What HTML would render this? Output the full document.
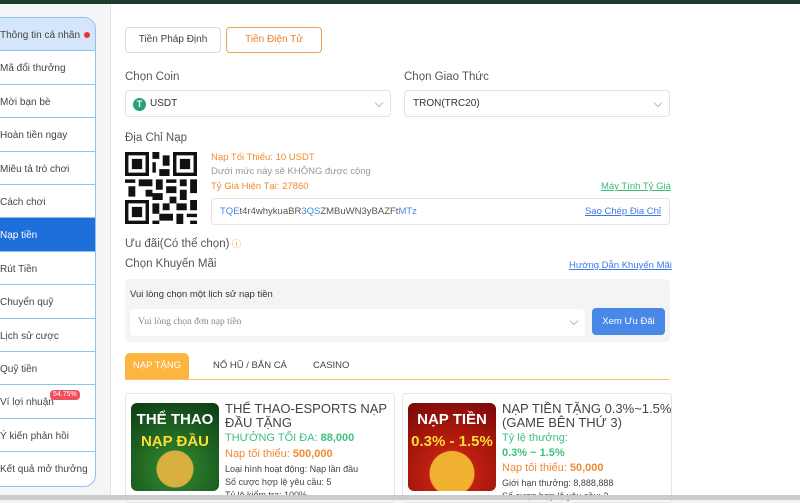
<!DOCTYPE html>
<html><head><meta charset="utf-8"><style>
*{box-sizing:border-box;margin:0;padding:0}
body{width:800px;height:500px;overflow:hidden;background:#f4f5f7;font-family:"Liberation Sans",sans-serif;position:relative;color:#333}
.top{position:absolute;left:0;top:0;width:800px;height:4px;background:#1d3a2a}
.side{position:absolute;left:-8px;top:17px;width:104px;height:470px;border:1px solid #8ec0f0;border-radius:0 12px 12px 0;background:#fff;overflow:hidden}
.side div{height:33.4px;border-bottom:1px solid #8ec0f0;font-size:10px;color:#444;padding-left:7px;line-height:35px;position:relative}
.side .first{background:#d5e6fb}
.side .act{background:#1e6fd9;color:#fff}
.dot{position:absolute;left:91px;top:14px;width:6px;height:6px;border-radius:50%;background:#e53935}
.badge{position:absolute;left:57px;top:5px;background:#ef4e5c;color:#fff;font-size:7px;line-height:10px;padding:0 3px;border-radius:4px}
.main{position:absolute;left:110px;top:4px;width:690px;height:492px;background:#fff;border-left:1px solid #e4e4e4}
.abs{position:absolute}
.btn{position:absolute;height:26px;border:1px solid #ddd;border-radius:4px;font-size:10px;line-height:24px;text-align:center;color:#444}
.lbl{position:absolute;font-size:11.5px;color:#555}
.sel{position:absolute;height:27px;border:1px solid #e3e3e3;border-radius:4px;font-size:10px;line-height:26px;padding-left:8px;color:#333}
.chev{position:absolute;right:8px;top:9px;width:6px;height:6px;border-right:1px solid #bbb;border-bottom:1px solid #bbb;transform:rotate(45deg)}
.bottom{position:absolute;left:0;top:495px;width:800px;height:5px;background:#ccc}
.card{position:absolute;top:389px;width:270px;height:110px;border:1px solid #e6e6e6;border-radius:4px}
.card .img{position:absolute;left:5px;top:9px;width:88px;height:88px;border-radius:6px}
.t{position:absolute;left:99px;font-size:9px;color:#444;white-space:nowrap}
</style></head><body>
<div class="top"></div>
<div class="side">
<div class="first">Thông tin cá nhân<span class="dot"></span></div>
<div>Mã đổi thưởng</div><div>Mời bạn bè</div><div>Hoàn tiền ngay</div><div>Miêu tả trò chơi</div><div>Cách chơi</div>
<div class="act">Nạp tiền</div><div>Rút Tiền</div><div>Chuyển quỹ</div><div>Lịch sử cược</div><div>Quỹ tiền</div>
<div>Ví lợi nhuận<span class="badge">54.75%</span></div><div>Ý kiến phản hồi</div><div style="border:none">Kết quả mở thưởng</div>
</div>
<div class="main">
<div class="btn" style="left:14px;top:23px;width:96px">Tiền Pháp Định</div>
<div class="btn" style="left:115px;top:23px;width:96px;border-color:#f0a050;color:#e8802a">Tiền Điện Tử</div>
<div class="lbl" style="left:14px;top:67px">Chọn Coin</div>
<div class="sel" style="left:14px;top:86px;width:266px;padding-left:24px"><span class="abs" style="left:7px;top:7px;width:13px;height:13px;border-radius:50%;background:#26a17b;color:#fff;font-size:9px;line-height:13px;text-align:center;font-weight:bold">T</span>USDT<span class="chev"></span></div>
<div class="lbl" style="left:293px;top:67px">Chọn Giao Thức</div>
<div class="sel" style="left:293px;top:86px;width:266px">TRON(TRC20)<span class="chev"></span></div>
<div class="lbl" style="left:14px;top:128px">Địa Chỉ Nạp</div>
<svg class="abs" style="left:14px;top:148px" width="72" height="72" viewBox="0 0 21 21"><rect width="21" height="21" fill="#fff"/><g fill="#111"><path d="M0 0h7v7H0zM14 0h7v7h-7zM0 14h7v7H0z"/></g><g fill="#fff"><path d="M1 1h5v5H1zM15 1h5v5h-5zM1 15h5v5H1z"/></g><g fill="#111"><path d="M2 2h3v3H2zM16 2h3v3h-3zM2 16h3v3H2zM8 0h2v2H8zM11 1h2v3h-2zM8 3h1v3H8zM10 5h3v2h-3zM0 8h3v1H0zM4 8h4v2H4zM9 8h2v3H9zM12 8h3v1h-3zM16 8h2v2h-2zM19 8h2v4h-2zM1 10h2v3H1zM6 11h2v2H6zM12 10h3v2h-3zM8 12h3v2H8zM16 11h2v3h-2zM13 13h2v2h-2zM8 15h2v3H8zM11 15h2v2h-2zM15 15h3v2h-3zM19 14h2v3h-2zM10 18h4v2h-4zM15 18h2v3h-2zM18 18h3v1h-3zM8 20h2v1H8zM19 20h2v1h-2z"/></g></svg>
<div class="abs" style="left:100px;top:148px;font-size:9.5px;color:#f08a30">Nạp Tối Thiểu: 10 USDT</div>
<div class="abs" style="left:100px;top:162px;font-size:9.5px;color:#999">Dưới mức này sẽ KHÔNG được cộng</div>
<div class="abs" style="left:100px;top:177px;font-size:9.5px;color:#f08a30">Tỷ Giá Hiện Tại: 27860</div>
<div class="abs" style="left:490px;top:177px;font-size:9.5px;color:#3cb878;text-decoration:underline">Máy Tính Tỷ Giá</div>
<div class="sel" style="left:100px;top:194px;width:459px;color:#555;font-size:9.5px"><span style="color:#3d8be0">TQE</span>t4r4whykuaBR<span style="color:#3d8be0">3QS</span>ZMBuWN3yBAZFt<span style="color:#3d8be0">MTz</span><span class="abs" style="right:8px;top:0;color:#3d7be0;text-decoration:underline">Sao Chép Địa Chỉ</span></div>
<div class="lbl" style="left:14px;top:233px">Ưu đãi(Có thể chọn)<span style="color:#f0a030;font-size:9px"> ⓘ</span></div>
<div class="lbl" style="left:14px;top:254px">Chọn Khuyến Mãi</div>
<div class="abs" style="left:458px;top:256px;font-size:9.5px;color:#3d7be0;text-decoration:underline">Hướng Dẫn Khuyến Mãi</div>
<div class="abs" style="left:14px;top:275px;width:545px;height:63px;background:#f3f4f6;border-radius:5px">
<div class="abs" style="left:5px;top:10px;font-size:9.5px;color:#333">Vui lòng chọn một lịch sử nạp tiền</div>
<div class="sel" style="left:5px;top:30px;width:455px;background:#fff;border:none;font-family:'Liberation Serif',serif;color:#888;font-size:9.5px">Vui lòng chọn đơn nạp tiền<span class="chev"></span></div>
<div class="abs" style="left:467px;top:29px;width:73px;height:27px;background:#4a88e8;border-radius:4px;color:#fff;font-size:9.5px;text-align:center;line-height:27px">Xem Ưu Đãi</div>
</div>
<div class="abs" style="left:14px;top:349px;width:64px;height:26px;background:#fbb540;border-radius:5px 5px 0 0;color:#fff;font-size:9.5px;text-align:center;line-height:26px">NẠP TẶNG</div>
<div class="abs" style="left:102px;top:356px;font-size:9.5px;color:#444">NỔ HŨ / BẮN CÁ</div>
<div class="abs" style="left:202px;top:356px;font-size:9.5px;color:#444">CASINO</div>
<div class="abs" style="left:14px;top:375px;width:545px;height:1px;background:#fbc560"></div>
<div class="card" style="left:14px">
<div class="img" style="background:radial-gradient(circle at 50% 75%,#d8b040 0 18px,#2a7a2a 19px,#0d3a14);color:#fff;font-weight:bold;text-align:center;font-size:15px;line-height:22px;padding-top:6px">THỂ THAO<br><span style="color:#ffdd30">NẠP ĐẦU</span></div>
<div class="t" style="top:8px;font-size:13px;line-height:14px;white-space:normal;width:165px">THỂ THAO-ESPORTS NẠP ĐẦU TẶNG</div>
<div class="t" style="top:38px;font-size:11px;color:#3cc080">THƯỞNG TỐI ĐA: <b>88,000</b></div>
<div class="t" style="top:54px;font-size:11px;color:#f08a30">Nạp tối thiểu: <b>500,000</b></div>
<div class="t" style="top:70px">Loại hình hoạt động: Nạp lần đầu</div>
<div class="t" style="top:83px">Số cược hợp lệ yêu cầu: 5</div>
<div class="t" style="top:96px">Tỷ lệ kiểm tra: 100%</div>
</div>
<div class="card" style="left:291px">
<div class="img" style="background:radial-gradient(circle at 50% 80%,#f0b030 0 22px,#c02010 23px,#7a0808);color:#fff;font-weight:bold;text-align:center;font-size:15px;line-height:22px;padding-top:6px">NẠP TIỀN<br><span style="color:#ffdd30">0.3% - 1.5%</span></div>
<div class="t" style="top:8px;font-size:13px;line-height:14px;white-space:normal;width:170px">NẠP TIỀN TẶNG 0.3%~1.5% (GAME BÊN THỨ 3)</div>
<div class="t" style="top:38px;font-size:11px;color:#3cc080">Tỷ lệ thưởng:</div>
<div class="t" style="top:53px;font-size:11px;color:#3cc080"><b>0.3% ~ 1.5%</b></div>
<div class="t" style="top:68px;font-size:11px;color:#f08a30">Nạp tối thiểu: <b>50,000</b></div>
<div class="t" style="top:84px">Giới hạn thưởng: 8,888,888</div>
<div class="t" style="top:97px">Số cược hợp lệ yêu cầu: 2</div>
</div>
</div>
<div class="bottom"></div>
</body></html>
